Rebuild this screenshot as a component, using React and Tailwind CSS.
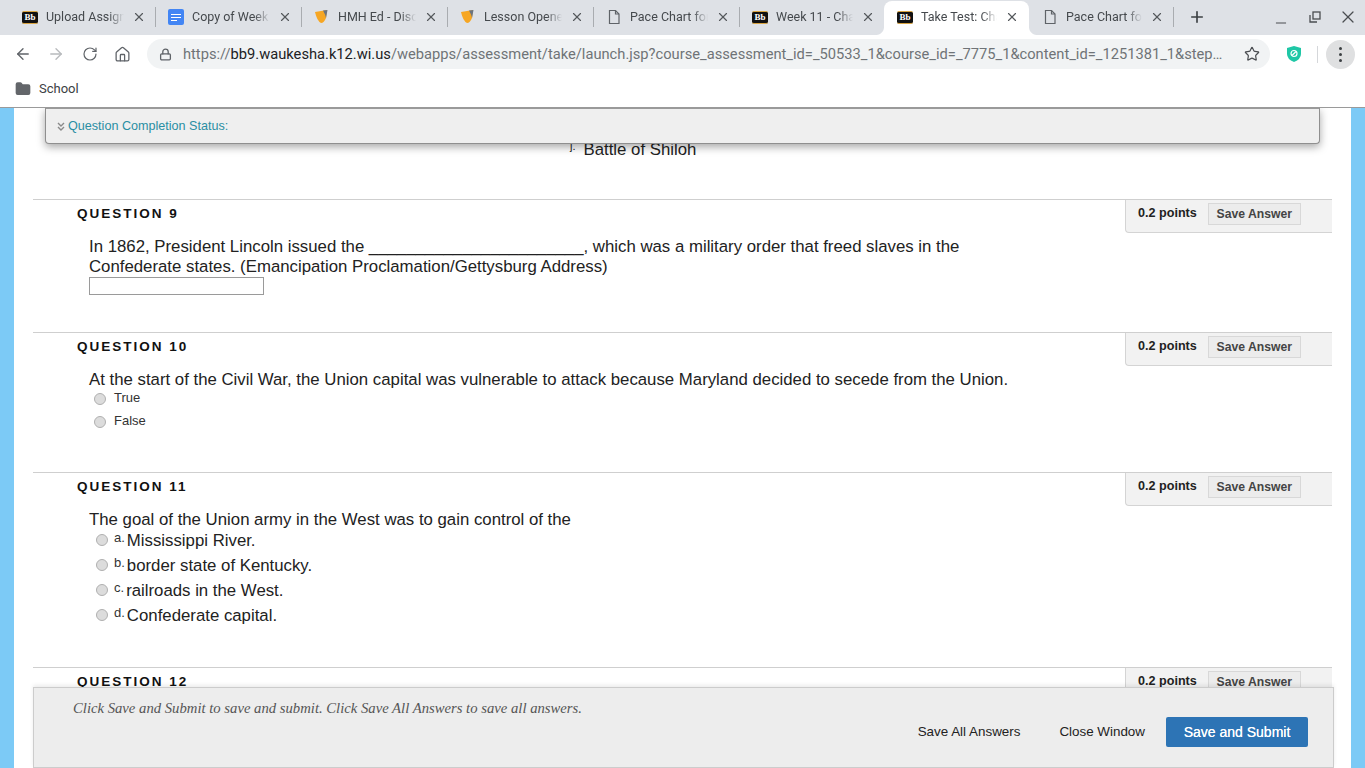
import { X, Plus, ArrowLeft, ArrowRight, RotateCw, Home, Lock, Star, Folder, Minus } from "lucide-react";

const tabs = [
  { title: "Upload Assignment", icon: "bb", x: "w-[146px] pl-[12px]" },
  { title: "Copy of Week 11", icon: "doc", x: "w-[146px] pl-[12px]" },
  { title: "HMH Ed - Discussion", icon: "hmh", x: "w-[146px] pl-[12px]" },
  { title: "Lesson Opener", icon: "hmh", x: "w-[146px] pl-[12px]" },
  { title: "Pace Chart for", icon: "page", x: "w-[146px] pl-[12px]" },
  { title: "Week 11 - Chapter", icon: "bb", x: "w-[145px] pl-[12px]" },
  { title: "Take Test: Chapter", icon: "bb", x: "w-[145px] -ml-px pl-[13px]", active: true },
  { title: "Pace Chart for", icon: "page", x: "w-[145px] pl-[13px]" },
];

function BbIcon() {
  return (
    <span className="w-4 h-[13px] bg-[#111] rounded-[2px] border-y border-[#d9a441] flex items-center justify-center text-white text-[9px] font-bold leading-none font-['Liberation_Serif',serif]">
      Bb
    </span>
  );
}

function DocIcon() {
  return (
    <span className="w-4 h-4 bg-[#4285f4] rounded-[2px] flex flex-col justify-center gap-[2px] px-[3px]">
      <span className="h-px bg-white" />
      <span className="h-px bg-white" />
      <span className="h-px bg-white w-[6px]" />
    </span>
  );
}

function HmhIcon() {
  return (
    <svg width="16" height="16" viewBox="0 0 16 16">
      <path d="M1 3 L13 1 L12 9 Q10 14 7 14 Q3 12 1 3Z" fill="#f6a623" />
      <path d="M9 1.6 L13.5 1 L12 9 Q11.5 6 9 1.6Z" fill="#6b7480" />
    </svg>
  );
}

function PageIcon() {
  return (
    <svg width="16" height="16" viewBox="0 0 16 16" fill="none" stroke="#5f6368" strokeWidth="1.2">
      <path d="M3.5 1.5 H9.5 L13 5 V14.5 H3.5 Z" />
      <path d="M9.5 1.5 V5 H13" />
    </svg>
  );
}

function TabIcon({ type }) {
  if (type === "bb") return <BbIcon />;
  if (type === "doc") return <DocIcon />;
  if (type === "hmh") return <HmhIcon />;
  return <PageIcon />;
}

function Tab({ tab, hideSep }) {
  return (
    <div
      className={`${tab.x} h-[34px] pb-[2px] relative flex items-center pr-[10px] shrink-0 ${
        tab.active ? "bg-white rounded-t-[8px]" : ""
      }`}
    >
      {tab.active && (
        <>
          <span className="absolute -left-[8px] bottom-0 w-[8px] h-[8px] bg-[radial-gradient(circle_at_0_0,#dee1e6_7.5px,white_8.5px)]" />
          <span className="absolute -right-[8px] bottom-0 w-[8px] h-[8px] bg-[radial-gradient(circle_at_100%_0,#dee1e6_7.5px,white_8.5px)]" />
        </>
      )}
      <span className="w-4 flex justify-center shrink-0">
        <TabIcon type={tab.icon} />
      </span>
      <span className="ml-[8px] flex-1 overflow-hidden whitespace-nowrap text-[12.5px] text-[#45494d] [mask-image:linear-gradient(to_right,black_80%,transparent)]">
        {tab.title}
      </span>
      <X size={14} strokeWidth={2} className="ml-2 shrink-0 text-[#55585c]" />
      {!tab.active && !hideSep && (
        <span className="absolute right-0 top-[6px] h-[20px] w-px bg-[#a9acb0]" />
      )}
    </div>
  );
}

function BrowserChrome() {
  return (
    <div className="font-['Roboto',sans-serif] shrink-0">
      <div className="h-[35px] bg-[#dee1e6] flex items-end pl-[10px]">
        <div className="flex h-[34px]">
          {tabs.map((tab, i) => (
            <Tab key={i} tab={tab} hideSep={i === 5} />
          ))}
        </div>
        <div className="h-[34px] pb-[2px] w-[46px] flex items-center justify-center">
          <Plus size={18} strokeWidth={2.2} className="text-[#3c4043]" />
        </div>
        <div className="ml-auto h-[34px] pb-[2px] flex items-center text-[#4a4d51]">
          <div className="w-[34px] flex justify-center">
            <Minus size={16} strokeWidth={1.5} className="mt-[11px]" />
          </div>
          <div className="w-[33px] flex justify-center">
            <svg width="14" height="14" viewBox="0 0 14 14" fill="none" stroke="currentColor" strokeWidth="1.3">
              <rect x="5" y="2" width="7" height="7" />
              <path d="M2 5 V12 H9" />
            </svg>
          </div>
          <div className="w-[34px] flex justify-center">
            <X size={20} strokeWidth={1.5} />
          </div>
        </div>
      </div>
      <div className="h-[36px] pt-[2px] bg-white flex items-center pl-[14px] pr-[10px] text-[#5f6368]">
        <ArrowLeft size={18} strokeWidth={1.8} />
        <ArrowRight size={18} strokeWidth={1.8} className="ml-[15px] text-[#b8babd]" />
        <RotateCw size={16} strokeWidth={1.8} className="ml-[17px]" />
        <Home size={17} strokeWidth={1.8} className="ml-[16px]" />
        <div className="ml-[16px] w-[1124px] h-[30px] rounded-full bg-[#f1f3f4] flex items-center pl-[12px] pr-[10px]">
          <Lock size={13} strokeWidth={2.4} className="text-[#5f6368] shrink-0" />
          <div className="ml-[11px] pt-px whitespace-nowrap text-[14.7px] text-[#6f7377]">
            https://<span className="text-[#202124]">bb9.waukesha.k12.wi.us</span>
            /webapps/assessment/take/launch.jsp?course_assessment_id=_50533_1&course_id=_7775_1&content_id=_1251381_1&step…
          </div>
          <Star size={16} strokeWidth={1.8} className="ml-auto text-[#4a4d51] shrink-0" />
        </div>
        <svg width="16" height="18" viewBox="0 0 16 18" className="ml-[16px] shrink-0">
          <path d="M8 1 L15 3 V9 Q15 14 8 17 Q1 14 1 9 V3Z" fill="#1fc7a6" />
          <circle cx="8" cy="8.5" r="3" fill="none" stroke="white" strokeWidth="1.2" />
          <path d="M6 10.5 L10 6.5" stroke="white" strokeWidth="1.2" />
        </svg>
        <span className="ml-[15px] h-[17px] w-px bg-[#d5d7da]" />
        <div className="ml-[8px] w-[29px] h-[29px] rounded-full bg-[#dfe0e1] flex flex-col items-center justify-center gap-[3px]">
          <span className="w-[3px] h-[3px] rounded-full bg-[#3c4043]" />
          <span className="w-[3px] h-[3px] rounded-full bg-[#3c4043]" />
          <span className="w-[3px] h-[3px] rounded-full bg-[#3c4043]" />
        </div>
      </div>
      <div className="h-[37px] bg-white flex items-center pl-[15px] border-b border-[#9a9a9a]">
        <Folder size={16} fill="#63666a" stroke="#63666a" />
        <span className="ml-[8px] text-[13px] text-[#3c4043]">School</span>
      </div>
    </div>
  );
}

function Radio({ className }) {
  return (
    <input
      type="radio"
      readOnly
      className={`appearance-none w-3 h-3 rounded-full border border-[#b0b0b0] bg-[#dcdcdc] shrink-0 ${className}`}
    />
  );
}

function Question({ number, height, children }) {
  return (
    <section className={`${height} border-t border-[#cfcfcf] shrink-0`}>
      <div className="flex justify-between">
        <h3 className="pl-[44px] pt-[5px] text-[13.5px] leading-[17px] font-bold tracking-[2px] text-[#111]">
          QUESTION {number}
        </h3>
        <div className="w-[207px] h-[33px] bg-[#f2f2f2] border-b border-l border-[#d4d4d4] rounded-bl-[4px] flex items-start pl-[12px] pt-[3px]">
          <span className="text-[12.6px] leading-[20px] font-bold text-[#222]">0.2 points</span>
          <button className="ml-[11px] w-[93px] h-[22px] bg-[#ececec] border border-[#d8d8d8] text-[12.2px] font-bold text-[#444] leading-none">
            Save Answer
          </button>
        </div>
      </div>
      <div className="pl-[56px] text-[16.8px] leading-[20px] text-[#222] mt-[4px]">{children}</div>
    </section>
  );
}

function LetterOption({ letter, text }) {
  return (
    <div className="h-[25px] flex items-center">
      <Radio className="ml-[7px] -mt-[2px]" />
      <span className="ml-[6px] text-[13px] text-[#333] -mt-[5px]">{letter}.</span>
      <span className="ml-[2px] text-[16.8px] text-[#222]">{text}</span>
    </div>
  );
}

function TrueFalse({ label }) {
  return (
    <div className="h-[23px] flex items-center">
      <Radio className="ml-[5px]" />
      <span className="ml-[8px] text-[13px] text-[#333] -mt-[2px]">{label}</span>
    </div>
  );
}

export default function App() {
  return (
    <div className="h-[768px] w-[1365px] overflow-hidden flex flex-col bg-white font-['Liberation_Sans',sans-serif]">
      <BrowserChrome />
      <div className="flex-1 relative overflow-hidden bg-[#7ccaf6] px-[14px]">
        <main className="h-full bg-white px-[19px] overflow-hidden">
          <div className="h-[91px] flex items-end pb-[39px] pl-[537px] text-[16.8px] leading-[20px] text-[#222]">
            <span className="text-[11px] mr-[8px] mb-[4px]">j.</span>
            <span>Battle of Shiloh</span>
          </div>
          <Question number="9" height="h-[133px]">
            <p className="w-[900px]">
              In 1862, President Lincoln issued the _______________________, which was a military order that freed slaves in the Confederate states. (Emancipation Proclamation/Gettysburg Address)
            </p>
            <input type="text" readOnly className="block w-[175px] h-[18px] border border-[#9a9a9a] bg-white" />
          </Question>
          <Question number="10" height="h-[140px]">
            <p>At the start of the Civil War, the Union capital was vulnerable to attack because Maryland decided to secede from the Union.</p>
            <div className="-mt-[3px]">
              <TrueFalse label="True" />
              <TrueFalse label="False" />
            </div>
          </Question>
          <Question number="11" height="h-[195px]">
            <p>The goal of the Union army in the West was to gain control of the</p>
            <div className="-mt-[2px]">
              <LetterOption letter="a" text="Mississippi River." />
              <LetterOption letter="b" text="border state of Kentucky." />
              <LetterOption letter="c" text="railroads in the West." />
              <LetterOption letter="d" text="Confederate capital." />
            </div>
          </Question>
          <Question number="12" height="h-[80px]" />
        </main>

        <div className="absolute left-[45px] top-0 w-[1275px] h-[36px] bg-[#efefef] border border-[#8f8f8f] border-t-[#9a9a9a] rounded-b-[4px] shadow-[0_3px_8px_rgba(0,0,0,0.35)] flex items-center pl-[11px]">
          <svg width="8" height="9" viewBox="0 0 8 9" fill="none" stroke="#8a8a8a" strokeWidth="1.4">
            <path d="M1 1 L4 4 L7 1" />
            <path d="M1 5 L4 8 L7 5" />
          </svg>
          <span className="ml-[3px] text-[12.6px] text-[#2a8ea3]">Question Completion Status:</span>
        </div>

        <div className="absolute left-[33px] bottom-0 w-[1301px] h-[81px] bg-[#ededed] border border-[#cccccc] shadow-[0_-2px_4px_rgba(0,0,0,0.08)]">
          <p className="pl-[39px] pt-[12px] text-[14.7px] leading-[17px] italic text-[#555] font-['Liberation_Serif',serif]">
            Click Save and Submit to save and submit. Click Save All Answers to save all answers.
          </p>
          <div className="flex justify-end items-center pr-[25px] text-[13.4px]">
            <button className="text-[#222]">Save All Answers</button>
            <button className="ml-[39px] text-[#222]">Close Window</button>
            <button className="ml-[21px] w-[142px] h-[30px] bg-[#2d74b5] rounded-[2px] text-[14px] text-white [text-shadow:0_0_0.5px_white]">
              Save and Submit
            </button>
          </div>
        </div>
      </div>
    </div>
  );
}
